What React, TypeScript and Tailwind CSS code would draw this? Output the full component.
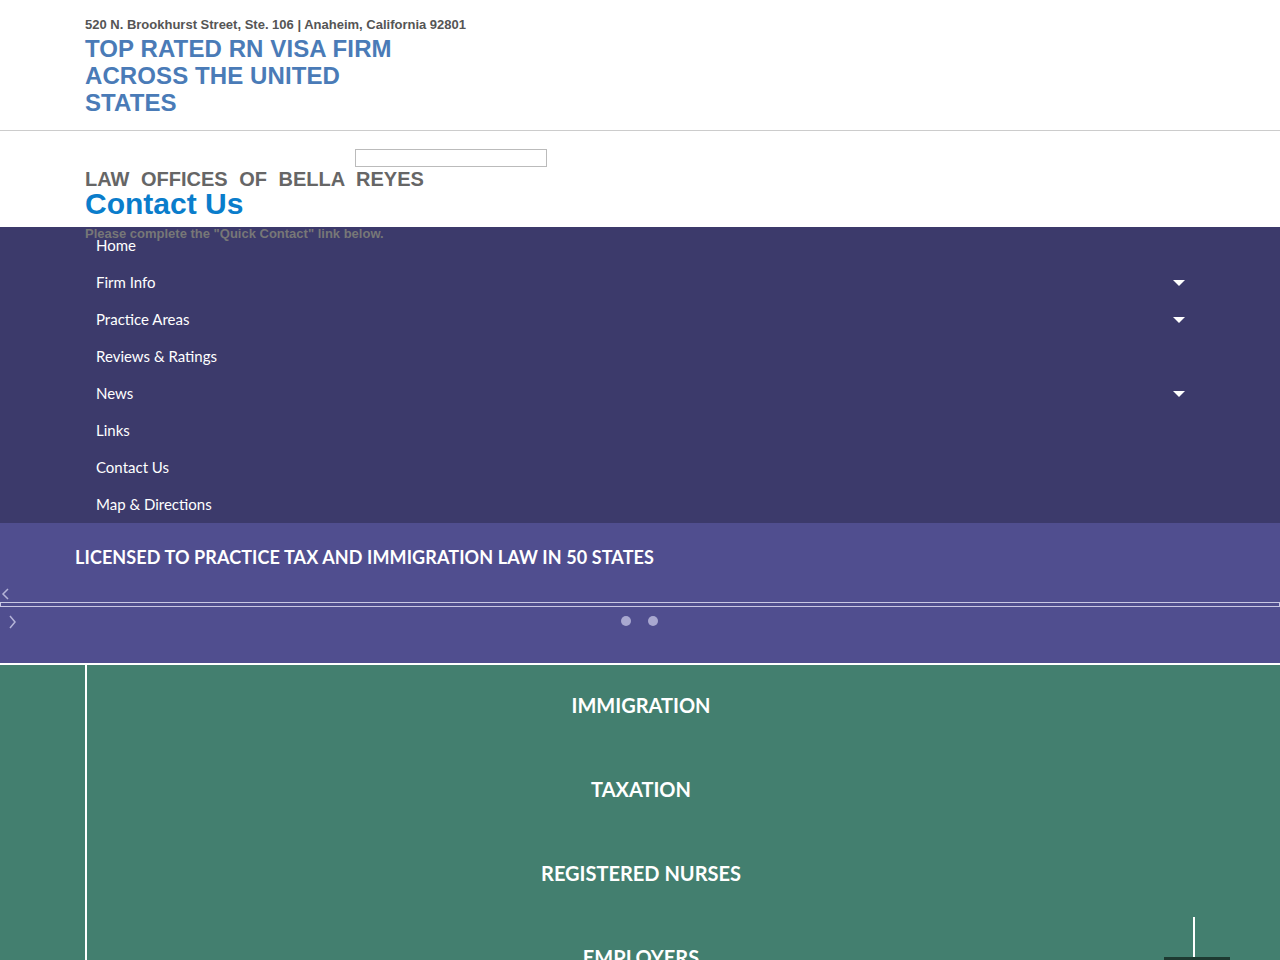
import React from 'react';

const navItems = [
    { label: 'Home', sub: false },
    { label: 'Firm Info', sub: true },
    { label: 'Practice Areas', sub: true },
    { label: 'Reviews & Ratings', sub: false },
    { label: 'News', sub: true },
    { label: 'Links', sub: false },
    { label: 'Contact Us', sub: false },
    { label: 'Map & Directions', sub: false },
];

const areas = ['IMMIGRATION', 'TAXATION', 'REGISTERED NURSES', 'EMPLOYERS'];

export default function App() {
    return (
        <div className="min-h-screen h-[960px] overflow-hidden bg-white">
            {/* top header */}
            <div className="h-[131px] border-b border-[#cccccc] pl-[85px] pt-[17px] font-['Liberation_Sans',Arial,sans-serif]">
                <p className="text-[13px] leading-[16px] font-bold text-[#555555]">
                    520 N. Brookhurst Street, Ste. 106 | Anaheim, California 92801
                </p>
                <h1 className="mt-[2px] w-[330px] text-[24px] leading-[27px] font-bold tracking-[0.1px] text-[#4a7bb7]">
                    TOP RATED RN VISA FIRM ACROSS THE UNITED STATES
                </h1>
            </div>

            {/* page title */}
            <div className="h-[96px] pl-[85px] pt-[18px] font-['Liberation_Sans',Arial,sans-serif]">
                <div className="ml-[270px] h-[18px] w-[192px] border border-[#bbbbbb] bg-white" />
                <p className="mt-[1px] text-[20px] leading-[22px] font-bold text-[#666666] [word-spacing:6px]">
                    LAW OFFICES OF BELLA REYES
                </p>
                <h2 className="text-[30px] leading-[28px] font-bold text-[#0a7dcb]">Contact Us</h2>
                <p className="mt-[8px] text-[13px] leading-[16px] font-bold text-[#777777]">
                    Please complete the "Quick Contact" link below.
                </p>
            </div>

            {/* nav */}
            <nav className="bg-[#3c3a6b] font-['Lato',sans-serif]">
                {navItems.map((item) => (
                    <div key={item.label} className="flex h-[37px] items-center justify-between pl-[96px] pr-[95px]">
                        <span className="text-[15px] text-white">{item.label}</span>
                        {item.sub && (
                            <span className="h-0 w-0 border-x-[6px] border-t-[6px] border-x-transparent border-t-white" />
                        )}
                    </div>
                ))}
            </nav>

            {/* banner slider */}
            <div className="h-[142px] border-b-2 border-white bg-[#504e8f] font-['Lato',sans-serif]">
                <p className="pl-[75px] pt-[22px] text-[18px] leading-[24px] font-bold tracking-[0.1px] text-white">
                    LICENSED TO PRACTICE TAX AND IMMIGRATION LAW IN 50 STATES
                </p>
                <svg className="ml-[1px] mt-[19px] block" width="9" height="12" viewBox="0 0 9 12">
                    <path d="M7 1 L2 6 L7 11" fill="none" stroke="#b5b4d8" strokeWidth="1.5" />
                </svg>
                <div className="mt-[2px] h-[5px] w-full border border-[#c9c8e4]" />
                <div className="flex items-center">
                    <svg className="ml-[8px] mt-[8px] block" width="9" height="14" viewBox="0 0 9 14">
                        <path d="M2 1 L7 7 L2 13" fill="none" stroke="#b5b4d8" strokeWidth="1.5" />
                    </svg>
                    <div className="ml-[604px] mt-[6px] flex gap-[17px]">
                        <span className="h-[10px] w-[10px] rounded-full bg-[#a9a8d0]" />
                        <span className="h-[10px] w-[10px] rounded-full bg-[#a9a8d0]" />
                    </div>
                </div>
            </div>

            {/* practice areas */}
            <div className="relative h-[300px] bg-[#437f6f] pl-[85px] font-['Lato',sans-serif]">
                <div className="h-full border-l-2 border-white pt-[28px]">
                    {areas.map((a) => (
                        <div key={a} className="h-[84px] pr-[85px] text-center text-[20px] leading-[24px] font-bold text-white">
                            {a}
                        </div>
                    ))}
                </div>
                <div className="absolute left-[1193px] top-[252px] h-[50px] w-[2px] bg-white" />
                <div className="absolute left-[1164px] top-[292px] h-[4px] w-[66px] bg-[#1e3a31]" />
            </div>
        </div>
    );
}
